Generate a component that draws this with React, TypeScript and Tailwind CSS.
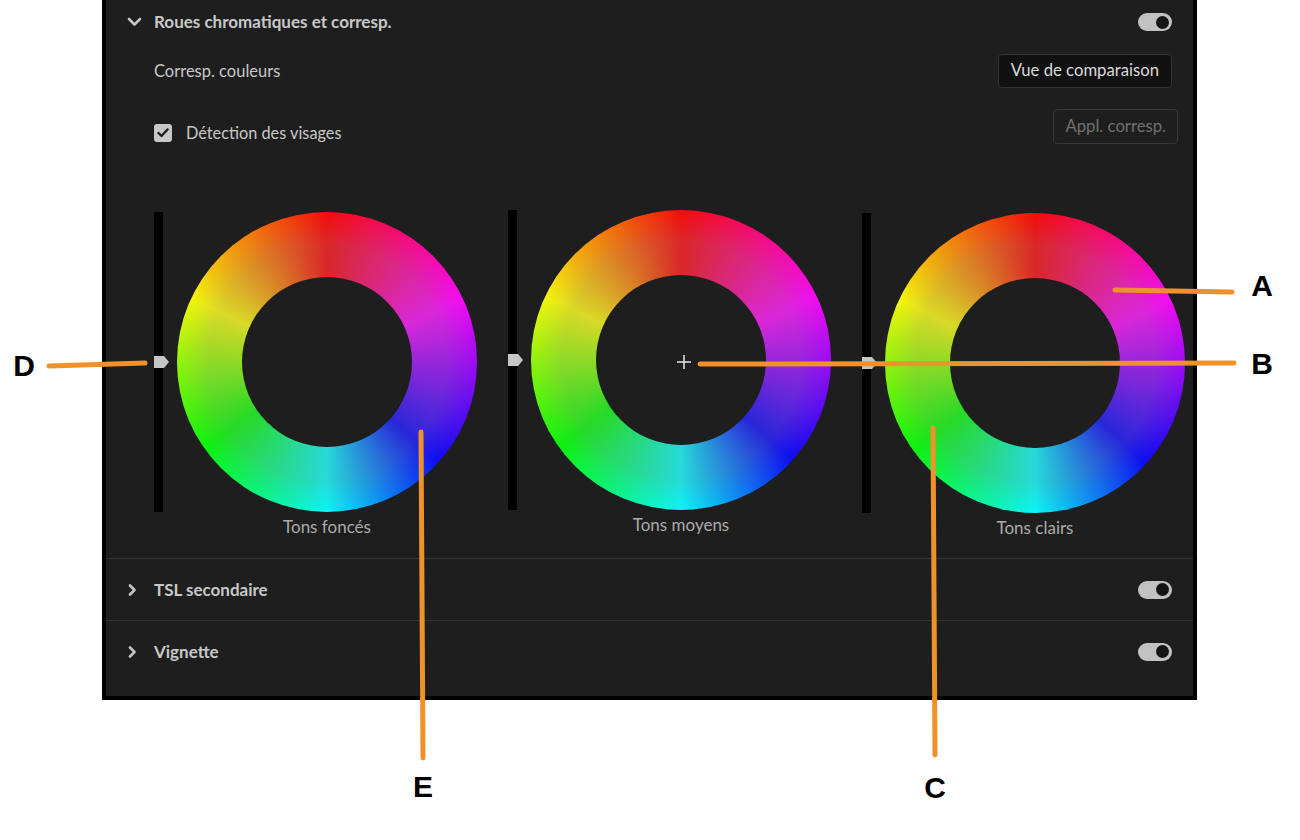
import React from 'react';

const font = "font-['Lato','Noto_Sans',sans-serif]";

const Toggle = () => (
  <div className="w-[34px] h-[18px] rounded-full bg-[#c2c2c2] flex items-center justify-end pr-[3px]">
    <div className="w-[13px] h-[13px] rounded-full bg-[#151515]" />
  </div>
);

const ChevronDown = () => (
  <svg width="15" height="10" viewBox="0 0 15 10" className="shrink-0">
    <polyline points="2,2 7.5,7.5 13,2" fill="none" stroke="#c4c4c4" strokeWidth="2.6" strokeLinecap="round" strokeLinejoin="round" />
  </svg>
);

const ChevronRight = () => (
  <svg width="15" height="12" viewBox="0 0 15 12" className="shrink-0">
    <polyline points="3,1.5 7.5,6 3,10.5" fill="none" stroke="#c4c4c4" strokeWidth="2.6" strokeLinecap="round" strokeLinejoin="round" />
  </svg>
);

const Slider = () => (
  <div className="relative w-[9px] h-[300px] bg-black shrink-0">
    <svg width="15" height="12" viewBox="0 0 15 12" className="absolute left-0 top-1/2 -translate-y-1/2">
      <polygon points="0,0 10,0 15,6 10,12 0,12" fill="#c6c6c6" />
    </svg>
  </div>
);

const Wheel = ({ cross }: { cross?: boolean }) => (
  <div className="relative w-[300px] h-[300px] rounded-full bg-[conic-gradient(#ff0000_0deg,#ff00ff_65deg,#0000ff_132deg,#00ffff_180deg,#00ff00_235deg,#ffff00_295deg,#ff0000_360deg)] flex items-center justify-center">
    <div className="absolute inset-0 rounded-full bg-[radial-gradient(circle,rgba(130,130,130,0.3)_56%,rgba(130,130,130,0)_76%)]" />
    <div className="relative w-[170px] h-[170px] rounded-full bg-[#1e1e1e] flex items-center justify-center">
      {cross && (
        <svg width="14" height="14" viewBox="0 0 14 14" className="translate-x-[3px] translate-y-[2px]">
          <line x1="7" y1="0" x2="7" y2="14" stroke="#e8e8e8" strokeWidth="1.5" />
          <line x1="0" y1="7" x2="14" y2="7" stroke="#e8e8e8" strokeWidth="1.5" />
        </svg>
      )}
    </div>
  </div>
);

const WheelGroup = ({ label, cross, offset }: { label: string; cross?: boolean; offset: string }) => (
  <div className={`flex items-start gap-[14px] ${offset}`}>
    <Slider />
    <div className="flex flex-col items-center">
      <Wheel cross={cross} />
      <div className="mt-[5px] text-[17px] leading-[20px] text-[#ababab]">{label}</div>
    </div>
  </div>
);

const Annotations = () => (
  <svg width="1300" height="840" className="absolute inset-0 pointer-events-none">
    <g stroke="#f0922a" strokeWidth="5" strokeLinecap="round" fill="none">
      <line x1="1115" y1="290" x2="1232" y2="292" />
      <line x1="700" y1="364" x2="1234" y2="363" />
      <line x1="49" y1="366" x2="145" y2="363" />
      <line x1="421" y1="432" x2="423" y2="758" />
      <line x1="933" y1="428" x2="935" y2="755" />
    </g>
    <g fontFamily="'Liberation Sans', Arial, sans-serif" fontWeight="bold" fontSize="30" fill="#000" textAnchor="middle">
      <text x="1262" y="296">A</text>
      <text x="1262" y="374">B</text>
      <text x="935" y="798">C</text>
      <text x="24" y="376">D</text>
      <text x="423" y="797">E</text>
    </g>
  </svg>
);

export default function App() {
  return (
    <div className={`relative w-[1300px] h-[840px] bg-white overflow-hidden ${font}`}>
      <div className="ml-[102px] w-[1095px] h-[700px] border-x-4 border-b-4 border-black bg-[#1e1e1e] flex flex-col">
        <div className="h-[44px] flex items-center justify-between pl-[21px] pr-[21px]">
          <div className="flex items-center gap-[12px]">
            <ChevronDown />
            <span className="text-[17px] font-bold text-[#c8c8c8]">Roues chromatiques et corresp.</span>
          </div>
          <Toggle />
        </div>

        <div className="mt-[10px] h-[34px] flex items-center justify-between pl-[48px] pr-[21px]">
          <span className="text-[16.5px] text-[#c8c8c8]">Corresp. couleurs</span>
          <button className="h-[34px] px-[12px] rounded-[4px] bg-[#111111] border border-[#333333] text-[16.7px] text-[#dadada]">
            Vue de comparaison
          </button>
        </div>

        <div className="mt-[21px] h-[35px] flex items-start justify-between pl-[48px] pr-[15px]">
          <div className="mt-[12px] flex items-center gap-[14px]">
            <div className="w-[18px] h-[18px] rounded-[3px] bg-[#c8c8c8] flex items-center justify-center">
              <svg width="12" height="10" viewBox="0 0 12 10">
                <polyline points="1.5,5 4.5,8 10.5,1.5" fill="none" stroke="#1e1e1e" strokeWidth="2.4" strokeLinecap="round" strokeLinejoin="round" />
              </svg>
            </div>
            <span className="text-[16.3px] text-[#c8c8c8]">Détection des visages</span>
          </div>
          <button className="h-[35px] px-[11px] rounded-[4px] border border-[#383838] text-[16.7px] text-[#707070]">
            Appl. corresp.
          </button>
        </div>

        <div className="h-[414px] pt-[66px] pl-[48px] flex items-start gap-[31px]">
          <WheelGroup label="Tons foncés" offset="mt-[2px]" />
          <WheelGroup label="Tons moyens" cross offset="mt-0" />
          <WheelGroup label="Tons clairs" offset="mt-[3px]" />
        </div>

        <div className="h-[62px] border-t border-[#333333] flex items-center justify-between pl-[21px] pr-[21px]">
          <div className="flex items-center gap-[12px]">
            <ChevronRight />
            <span className="text-[17px] font-bold text-[#c8c8c8]">TSL secondaire</span>
          </div>
          <Toggle />
        </div>
        <div className="h-[62px] border-t border-[#333333] flex items-center justify-between pl-[21px] pr-[21px]">
          <div className="flex items-center gap-[12px]">
            <ChevronRight />
            <span className="text-[17px] font-bold text-[#c8c8c8]">Vignette</span>
          </div>
          <Toggle />
        </div>
      </div>
      <Annotations />
    </div>
  );
}
